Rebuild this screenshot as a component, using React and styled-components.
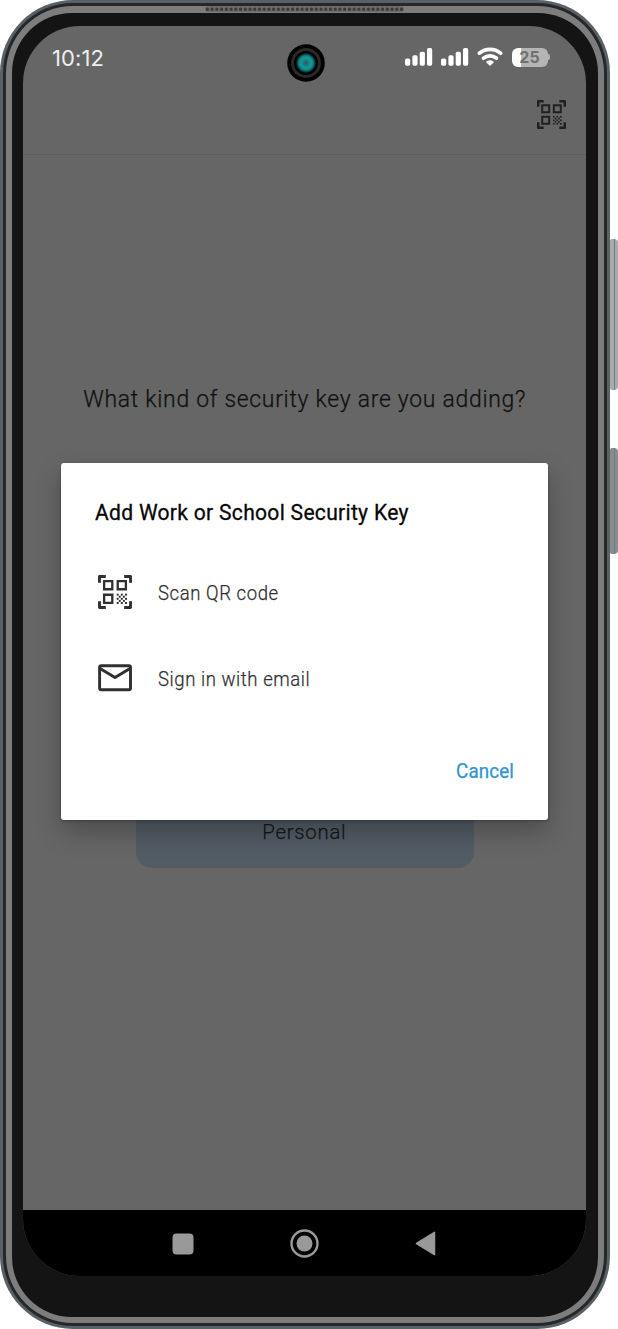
import React from "react";
import styled, { createGlobalStyle } from "styled-components";

const GlobalStyle = createGlobalStyle`
  *, *::before, *::after { box-sizing: border-box; }
  body { margin: 0; background: #fff; font-family: Roboto, "Liberation Sans", sans-serif; }
`;

const Stage = styled.main`
  display: flex;
  width: 618px;
  height: 1329px;
  overflow: hidden;
`;

const OuterRim = styled.div`
  flex: none;
  width: 609.5px;
  height: 1329px;
  padding: 2.7px;
  border-radius: 73px;
  background: #596167;
`;

const DarkRim = styled.div`
  height: 100%;
  padding: 3.3px;
  border-radius: 70px;
  background: #25282a;
`;

const MetalRim = styled.div`
  position: relative;
  height: 100%;
  padding: 7px 6px 6px;
  border-radius: 67px;
  background: #7d7d7d;
`;

const Bezel = styled.div`
  height: 100%;
  padding: 13px 11.5px 41px 11px;
  border-radius: 60px;
  background: #141414;
`;

const Screen = styled.div`
  position: relative;
  display: flex;
  flex-direction: column;
  height: 100%;
  overflow: hidden;
  border-radius: 57px;
  background: #666;
`;

const Speaker = styled.div`
  position: absolute;
  left: 199px;
  top: 0;
  width: 199px;
  height: 6px;
  border-radius: 3px;
  background: radial-gradient(circle at 2.4px 3.2px, #3c3c3c 1.4px, #6b6b6b 2px) 0 0 / 4.74px 6px;
`;

const StatusBar = styled.header`
  display: flex;
  justify-content: space-between;
  align-items: center;
  height: 62px;
  padding: 1px 36px 0 29px;
`;

const Clock = styled.time`
  padding-top: 1px;
  font: 400 22px/26px Inter, sans-serif;
  letter-spacing: 0.1px;
  color: #efefef;
`;

const StatusIcons = styled.div`
  display: flex;
  align-items: center;
`;

const Camera = styled.svg`
  position: absolute;
  left: 264px;
  top: 18px;
`;

const AppBar = styled.div`
  display: flex;
  justify-content: flex-end;
  height: 67px;
  padding: 12px 20.5px 0 0;
  border-bottom: 1px solid #5d5d5d;
  color: #202020;
`;

const Content = styled.section`
  display: flex;
  flex: 1;
  flex-direction: column;
  align-items: center;
`;

const Condensed = styled.span`
  display: inline-block;
  transform: scaleX(${(p) => p.$scale ?? 0.95});
  transform-origin: ${(p) => p.$origin ?? "center"};
  white-space: nowrap;
  -webkit-text-stroke: ${(p) => p.$stroke ?? 0.25}px currentColor;
`;

const Question = styled.h1`
  margin: 228px 0 0;
  font-size: 24px;
  font-weight: 300;
  line-height: 32px;
  letter-spacing: 0.75px;
  color: #101010;
`;

const ChoiceButton = styled.button`
  display: flex;
  align-items: center;
  justify-content: center;
  width: 338px;
  height: 73px;
  margin-top: 380px;
  padding: 1px 0 0;
  border: 0;
  border-radius: 16px;
  background: #525c65;
  color: #151719;
  font: 300 21px/28px Roboto, sans-serif;
  letter-spacing: 0.75px;
`;

const NavBar = styled.nav`
  display: flex;
  justify-content: center;
  align-items: center;
  gap: 96px;
  height: 66px;
  padding-top: 1px;
  background: #000;
`;

const Dialog = styled.div`
  position: absolute;
  left: 38px;
  top: 437.4px;
  display: flex;
  flex-direction: column;
  width: 487.4px;
  height: 356.6px;
  padding: 35px 34.5px 34px 34.5px;
  border-radius: 3px;
  background: #fff;
  box-shadow: 0 12px 26px rgba(0, 0, 0, 0.26), 0 1px 3px rgba(0, 0, 0, 0.25);
`;

const DialogTitle = styled.h2`
  margin: 0 0 21px;
  font-size: 22px;
  font-weight: 400;
  line-height: 30px;
  letter-spacing: 0.3px;
  color: #070707;
`;

const Option = styled.button`
  display: flex;
  align-items: center;
  gap: 26px;
  height: 86px;
  padding: 0 0 0 3px;
  border: 0;
  background: none;
  color: #303030;
  font: 300 19.5px/28px Roboto, sans-serif;
  letter-spacing: 0.6px;
`;

const OptionLabel = styled.span`
  padding-top: 3px;
`;

const CancelButton = styled.button`
  align-self: flex-end;
  margin-top: auto;
  padding: 0;
  border: 0;
  background: none;
  color: #3193cf;
  font: 400 19.5px/28px Roboto, sans-serif;
  letter-spacing: 0.1px;
`;

const SideButtons = styled.div`
  display: flex;
  flex-direction: column;
  gap: 58px;
  width: 8.5px;
  padding-top: 239px;
`;

const SideButton = styled.div`
  height: ${(p) => p.$height}px;
  border-radius: 2px 4px 4px 2px;
  background: linear-gradient(90deg, ${(p) => p.$tone} 3.5px, ${(p) => p.$seam} 4px 5px, ${(p) => p.$tone} 5.5px);
`;

const checkerCells = [
  [0, 0], [2, 0], [4, 0],
  [1, 1], [3, 1],
  [0, 2], [2, 2], [4, 2],
  [1, 3], [3, 3],
  [0, 4], [2, 4], [4, 4],
];

function QrIcon({ size }) {
  return (
    <svg width={size} height={size} viewBox="0 0 100 100" fill="none" stroke="currentColor">
      <path
        strokeWidth="8.5"
        strokeLinejoin="round"
        d="M4.3 23V4.3H23M77 4.3H95.7V23M95.7 77V95.7H77M23 95.7H4.3V77"
      />
      <path strokeWidth="6.8" d="M18 18H42V42H18ZM58 18H82V42H58ZM18 58H42V82H18Z" />
      <g fill="currentColor" stroke="none">
        {checkerCells.map(([x, y]) => (
          <rect key={`${x}-${y}`} x={55 + x * 6.1} y={55 + y * 6.1} width="5.7" height="5.7" />
        ))}
      </g>
    </svg>
  );
}

function MailIcon() {
  return (
    <svg width="34" height="28" viewBox="0 0 34 28" fill="none" stroke="currentColor" strokeWidth="2.9" strokeLinejoin="round">
      <rect x="1.6" y="1.7" width="30.9" height="24" rx="1.8" />
      <path d="M2 4.4L17 13.6L32 4.4" />
    </svg>
  );
}

function SignalIcon() {
  return (
    <svg width="28" height="20" viewBox="0 0 28 20" fill="#fff">
      <rect x="0" y="11.5" width="5.2" height="7.2" rx="1.7" />
      <rect x="7.4" y="8.3" width="5.2" height="10.4" rx="1.7" />
      <rect x="14.7" y="4.7" width="5.2" height="14" rx="1.7" />
      <rect x="22" y="1" width="5.2" height="17.7" rx="1.7" />
    </svg>
  );
}

const SignalPair = styled.div`
  display: flex;
  gap: 8.5px;
  margin-right: 8px;
`;

function WifiIcon() {
  return (
    <svg width="26" height="20" viewBox="0 0 26 20" fill="none" stroke="#fff" strokeWidth="3.7" strokeLinecap="round">
      <path d="M2.4 6.2C8.4 1.1 17.6 1.1 23.6 6.2" />
      <path d="M6.5 11.2C10.3 8 15.7 8 19.5 11.2" />
      <path d="M9.9 15Q13 12.9 16.1 15L13 18.1Z" fill="#fff" strokeWidth="1.4" strokeLinejoin="round" />
    </svg>
  );
}

const Battery = styled.div`
  display: flex;
  align-items: center;
  margin-left: 8.5px;

  &::after {
    content: "";
    width: 2px;
    height: 6px;
    margin-left: 0.5px;
    border-radius: 0 3px 3px 0;
    background: #b3b3b3;
  }
`;

const BatteryLevel = styled.span`
  display: flex;
  align-items: center;
  justify-content: center;
  width: 36px;
  height: 19.5px;
  border-radius: 6px;
  background: linear-gradient(90deg, #fff 25%, #b5b5b5 25%);
  color: #707070;
  font: 700 16px/20px Inter, sans-serif;
  letter-spacing: 0.2px;
`;

export default function App() {
  return (
    <>
      <GlobalStyle />
      <Stage>
        <OuterRim>
          <DarkRim>
            <MetalRim>
              <Speaker />
              <Bezel>
                <Screen>
                  <StatusBar>
                    <Clock>10:12</Clock>
                    <StatusIcons>
                      <SignalPair>
                        <SignalIcon />
                        <SignalIcon />
                      </SignalPair>
                      <WifiIcon />
                      <Battery>
                        <BatteryLevel>25</BatteryLevel>
                      </Battery>
                    </StatusIcons>
                  </StatusBar>
                  <Camera width="38" height="38" viewBox="0 0 38 38">
                    <defs>
                      <radialGradient id="lens">
                        <stop offset="0" stopColor="#31595b" />
                        <stop offset="0.28" stopColor="#237b7c" />
                        <stop offset="0.5" stopColor="#129b9b" />
                        <stop offset="0.72" stopColor="#0c8585" />
                        <stop offset="1" stopColor="#001010" />
                      </radialGradient>
                    </defs>
                    <circle cx="19" cy="19" r="18.8" fill="#000" />
                    <circle cx="19" cy="19" r="13.5" fill="none" stroke="#292929" strokeWidth="3" />
                    <circle cx="19" cy="19" r="10" fill="url(#lens)" />
                  </Camera>
                  <AppBar>
                    <QrIcon size={29} />
                  </AppBar>
                  <Content>
                    <Question>
                      <Condensed $scale={0.956}>What kind of security key are you adding?</Condensed>
                    </Question>
                    <ChoiceButton>
                      <Condensed $scale={0.97}>Personal</Condensed>
                    </ChoiceButton>
                  </Content>
                  <NavBar>
                    <svg width="22" height="22" viewBox="0 0 22 22">
                      <rect x="0.5" y="0.5" width="21" height="21" rx="4" fill="#999" />
                    </svg>
                    <svg width="29" height="29" viewBox="0 0 29 29">
                      <circle cx="14.5" cy="14.5" r="13" fill="none" stroke="#999" strokeWidth="2.4" />
                      <circle cx="14.5" cy="14.5" r="8" fill="#999" />
                    </svg>
                    <svg width="22" height="25" viewBox="0 0 22 25">
                      <path d="M1.5 12.5L19.5 1.3V23.7Z" fill="#999" stroke="#999" strokeWidth="1.5" strokeLinejoin="round" />
                    </svg>
                  </NavBar>
                  <Dialog role="dialog" aria-label="Add Work or School Security Key">
                    <DialogTitle>
                      <Condensed $origin="left" $scale={0.958} $stroke={0.3}>Add Work or School Security Key</Condensed>
                    </DialogTitle>
                    <Option>
                      <QrIcon size={34} />
                      <OptionLabel>
                        <Condensed $origin="left">Scan QR code</Condensed>
                      </OptionLabel>
                    </Option>
                    <Option>
                      <MailIcon />
                      <OptionLabel>
                        <Condensed $origin="left">Sign in with email</Condensed>
                      </OptionLabel>
                    </Option>
                    <CancelButton>
                      <Condensed $origin="right" $scale={0.965}>Cancel</Condensed>
                    </CancelButton>
                  </Dialog>
                </Screen>
              </Bezel>
            </MetalRim>
          </DarkRim>
        </OuterRim>
        <SideButtons>
          <SideButton $height={151} $tone="#a6abae" $seam="#74797c" />
          <SideButton $height={106} $tone="#878c8f" $seam="#74797c" />
        </SideButtons>
      </Stage>
    </>
  );
}
